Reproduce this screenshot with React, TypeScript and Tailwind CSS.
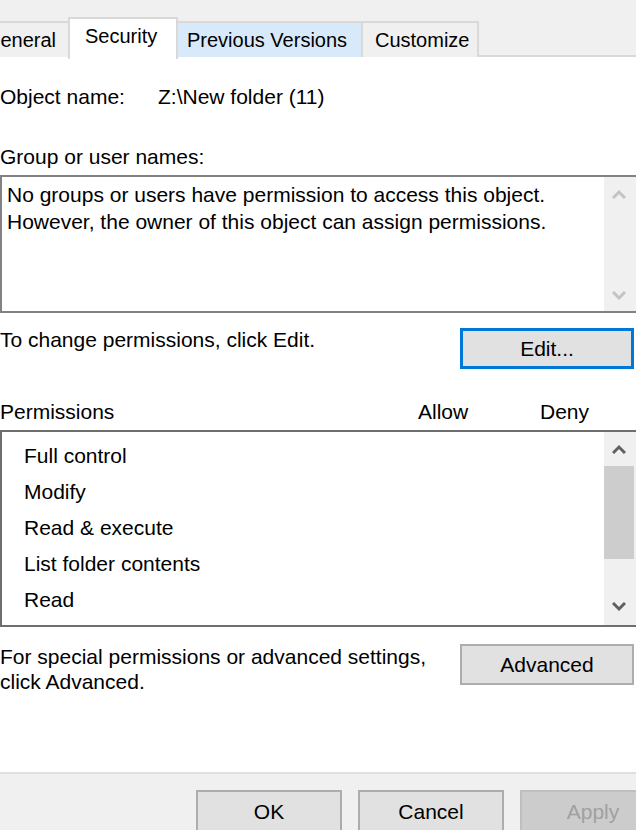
import React from "react";

const font = { fontFamily: '"Liberation Sans", Arial, sans-serif' };

const Chevron: React.FC<{ dir: "up" | "down"; color: string }> = ({ dir, color }) => (
  <svg width="14" height="10" viewBox="0 0 14 10">
    <polyline
      points={dir === "up" ? "1,9 7,3 13,9" : "1,1 7,7 13,1"}
      fill="none"
      stroke={color}
      strokeWidth="3"
    />
  </svg>
);

const Tab: React.FC<{ label: string; active?: boolean; hover?: boolean; className?: string }> = ({
  label,
  active,
  hover,
  className = "",
}) => (
  <div
    className={`flex items-center whitespace-nowrap text-[20px] border-2 border-b-0 border-[#d9d9d9] ${
      active
        ? "h-[42px] -mb-[2px] bg-white z-10 px-[15px] -mx-[2px]"
        : hover
          ? "h-[36px] bg-[#d8eaf9] px-[9px]"
          : "h-[36px] bg-[#f0f0f0] px-[12px]"
    } ${className}`}
  >
    <span className={active ? "-mt-[6px]" : ""}>{label}</span>
  </div>
);

const DialogButton: React.FC<{
  label: string;
  variant?: "default" | "focused" | "disabled";
  className?: string;
}> = ({ label, variant = "default", className = "" }) => {
  const styles = {
    default: "border-2 border-[#adadad] bg-[#e1e1e1] text-black",
    focused: "border-[3px] border-[#0078d7] bg-[#e1e1e1] text-black",
    disabled: "border-2 border-[#bfbfbf] bg-[#cccccc] text-[#a0a0a0]",
  }[variant];
  return (
    <div className={`flex items-center justify-center shrink-0 ${styles} ${className}`}>{label}</div>
  );
};

export default function App() {
  const permissions = ["Full control", "Modify", "Read & execute", "List folder contents", "Read"];

  return (
    <div
      className="w-[636px] h-[830px] bg-white overflow-hidden flex flex-col text-[21px] leading-[24px] text-black"
      style={font}
    >
      {/* tab strip */}
      <div className="h-[57px] shrink-0 bg-[#f0f0f0] border-b-2 border-[#d9d9d9] flex items-end">
        <div className="flex items-end -mb-[2px]">
          <Tab label="General" className="-ml-[40px] w-[110px] justify-end" />
          <Tab label="Security" active className="w-[110px]" />
          <Tab label="Previous Versions" hover className="w-[187px]" />
          <Tab label="Customize" className="w-[118px] -ml-[2px]" />
        </div>
      </div>

      {/* security page */}
      <div className="flex flex-col">
        <div className="mt-[28px] flex">
          <span className="w-[158px]">Object name:</span>
          <span>Z:\New folder (11)</span>
        </div>

        <div className="mt-[36px]">Group or user names:</div>

        <div className="mt-[6px] w-[640px] h-[138px] border-2 border-[#828282] flex">
          <div className="flex-1 pl-[5px] pt-[4px] leading-[27px]">
            <div>No groups or users have permission to access this object.</div>
            <div>However, the owner of this object can assign permissions.</div>
          </div>
          <div className="w-[34px] bg-[#f0f0f0] flex flex-col items-center justify-between pt-[12px] pb-[10px] pr-[4px]">
            <Chevron dir="up" color="#c3c3c3" />
            <Chevron dir="down" color="#c3c3c3" />
          </div>
        </div>

        <div className="mt-[15px] flex justify-between">
          <span>To change permissions, click Edit.</span>
          <DialogButton label="Edit..." variant="focused" className="w-[174px] h-[41px] mr-[2px]" />
        </div>

        <div className="mt-[31px] flex">
          <span className="w-[418px]">Permissions</span>
          <span className="w-[122px]">Allow</span>
          <span>Deny</span>
        </div>

        <div className="mt-[6px] w-[640px] h-[197px] border-2 border-[#6e6e6e] flex">
          <div className="flex-1 pl-[22px] pt-[12px] flex flex-col">
            {permissions.map((p) => (
              <div key={p} className="h-[36px]">
                {p}
              </div>
            ))}
          </div>
          <div className="w-[34px] bg-[#f0f0f0] flex flex-col pr-[4px]">
            <div className="h-[34px] flex items-center justify-center">
              <Chevron dir="up" color="#606060" />
            </div>
            <div className="h-[93px] bg-[#cdcdcd]" />
            <div className="flex-1 flex items-end justify-center pb-[13px]">
              <Chevron dir="down" color="#606060" />
            </div>
          </div>
        </div>

        <div className="mt-[17px] flex justify-between">
          <div className="leading-[25px]">
            <div>For special permissions or advanced settings,</div>
            <div>click Advanced.</div>
          </div>
          <DialogButton label="Advanced" className="w-[174px] h-[41px] mr-[2px]" />
        </div>
      </div>

      <div className="flex-1" />

      {/* footer buttons */}
      <div className="h-[58px] shrink-0 bg-[#f0f0f0] border-t-2 border-[#dfdfdf] flex items-start pt-[16px] pl-[196px] gap-[16px]">
        <DialogButton label="OK" className="w-[146px] h-[44px]" />
        <DialogButton label="Cancel" className="w-[146px] h-[44px]" />
        <DialogButton label="Apply" variant="disabled" className="w-[146px] h-[44px]" />
      </div>
    </div>
  );
}
